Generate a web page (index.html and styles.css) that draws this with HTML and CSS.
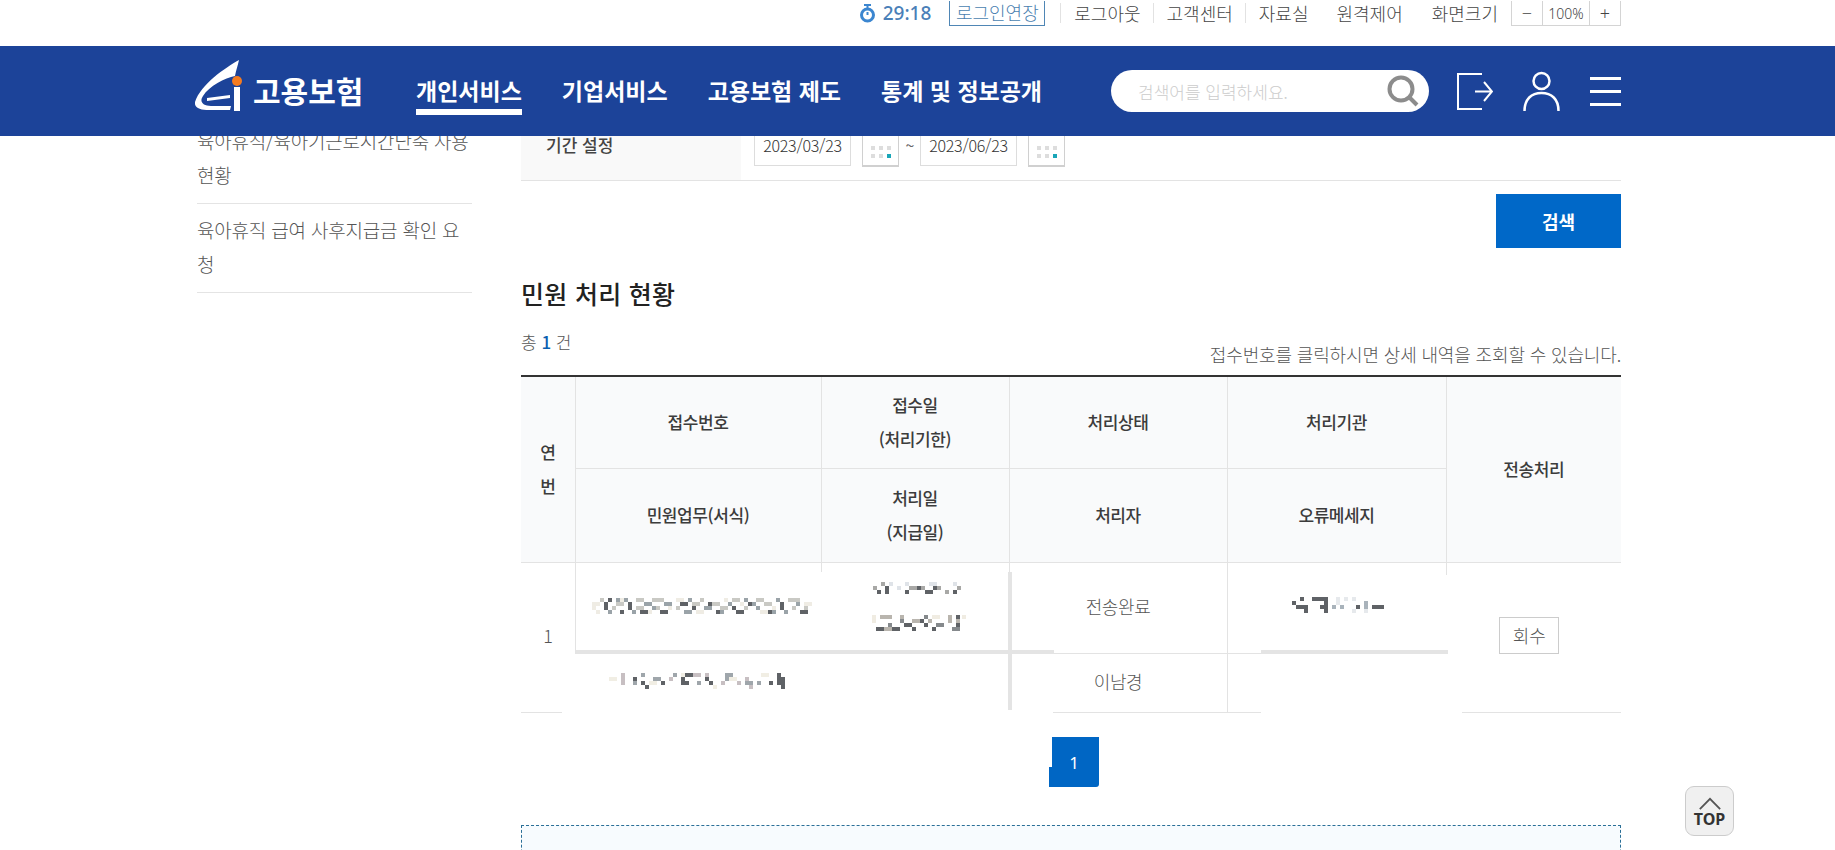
FILE: index.html
```html
<!DOCTYPE html>
<html lang="ko">
<head>
  <meta charset="UTF-8" />
  <title>고용보험 - 민원 처리 현황</title>
  <link rel="stylesheet" href="styles.css">
</head>
<body>

<div class="util">
  <div class="util-in">
    <svg class="watch" viewBox="0 0 19 19"><path d="M6 1h7M9.500 1v3" stroke="#3b86d0" stroke-width="2" fill="none"/><circle cx="9.500" cy="11" r="6" fill="none" stroke="#3b86d0" stroke-width="3"/><path d="M9.500 8v3" stroke="#3b86d0" stroke-width="2"/></svg>
    <span class="time">29:18</span>
    <a class="extend">로그인연장</a>
    <a class="util-link">로그아웃</a>
    <a class="util-link">고객센터</a>
    <a class="util-link">자료실</a>
    <a class="util-link plain">원격제어</a>
    <a class="util-link plain">화면크기</a>
    <div class="zoom-box">
      <span class="zb-btn">−</span>
      <span class="zb-val">100%</span>
      <span class="zb-btn">+</span>
    </div>
  </div>
</div>

<header class="nav">
  <div class="nav-in">
    <a class="logo">
      <svg class="logo-mark" viewBox="0 0 50 52">
        <path fill="#fff" d="M44 0C30 8 6 24 0 42C-1 48 6 50 14 50L35 50L36 46L16 46C8 46 4 42 8 36C14 26 30 18 40 16C41 10 43 5 44 0Z"/>
        <path fill="#fff" d="M12 38L35 35L35 38L12 41Z"/>
        <rect fill="#fff" x="39" y="27" width="6" height="24"/>
        <circle fill="#f47b20" cx="42" cy="21" r="5"/>
      </svg>
      <span class="logo-text">고용보험</span>
    </a>
    <nav class="menu">
      <a class="on">개인서비스</a>
      <a>기업서비스</a>
      <a>고용보험 제도</a>
      <a>통계 및 정보공개</a>
    </nav>
    <div class="search">
      <span class="ph">검색어를 입력하세요.</span>
      <svg class="glass" viewBox="0 0 34 32"><circle cx="15" cy="14" r="11.500" fill="none" stroke="#8c8c8c" stroke-width="4"/><path d="M23 22l8 8" stroke="#8c8c8c" stroke-width="4"/></svg>
    </div>
    <svg class="ico-out" viewBox="0 0 36 37" fill="none" stroke="#fff" stroke-width="2"><path d="M25 1H1v35h24"/><path d="M18 18.500h17M27 9l8 9.500-8 9.500"/></svg>
    <svg class="ico-user" viewBox="0 0 37 40" fill="none" stroke="#fff" stroke-width="2.500"><circle cx="18.500" cy="10" r="8"/><path d="M1.500 40c0-12 7-18 17-18s17 6 17 18"/></svg>
    <div class="ico-menu"><i></i><i></i><i></i></div>
  </div>
</header>

<div class="wrap">
  <aside class="side">
    <a class="side-item">육아휴직/육아기근로시간단축 사용 현황</a>
    <a class="side-item">육아휴직 급여 사후지급금 확인 요청</a>
  </aside>

  <main class="main">
    <div class="period">
      <div class="period-label">기간 설정</div>
      <div class="period-val">
        <span class="date">2023/03/23</span>
        <span class="cal"><i></i><i></i><i></i><i></i><i></i><i class="on"></i></span>
        <span class="tilde">~</span>
        <span class="date">2023/06/23</span>
        <span class="cal"><i></i><i></i><i></i><i></i><i></i><i class="on"></i></span>
      </div>
    </div>

    <div class="btn-row"><button class="btn-search">검색</button></div>

    <h3 class="title">민원 처리 현황</h3>

    <div class="count-row">
      <span class="count">총 <b>1</b> 건</span>
      <span class="note">접수번호를 클릭하시면 상세 내역을 조회할 수 있습니다.</span>
    </div>

    <div class="grid-wrap">
      <table class="grid">
        <colgroup>
          <col class="c1"><col class="c2"><col class="c3"><col class="c4"><col class="c5"><col class="c6">
        </colgroup>
        <thead>
          <tr class="h1">
            <th rowspan="2">연<br>번</th>
            <th>접수번호</th>
            <th>접수일<br>(처리기한)</th>
            <th>처리상태</th>
            <th>처리기관</th>
            <th rowspan="2">전송처리</th>
          </tr>
          <tr class="h2">
            <th>민원업무(서식)</th>
            <th>처리일<br>(지급일)</th>
            <th>처리자</th>
            <th>오류메세지</th>
          </tr>
        </thead>
        <tbody>
          <tr class="r1">
            <td rowspan="2">1</td>
            <td></td>
            <td></td>
            <td>전송완료</td>
            <td></td>
            <td rowspan="2"><button class="btn-small">회수</button></td>
          </tr>
          <tr class="r2">
            <td></td>
            <td></td>
            <td>이남경</td>
            <td></td>
          </tr>
        </tbody>
      </table>

      <!-- 개인정보 가림 처리 -->
      <div class="mask m-a"></div>
      <div class="mask m-b"></div>
      <div class="mask m-c"></div>
      <div class="mask m-d"></div>
      <div class="rule r-h1"></div>
      <div class="rule r-h2"></div>
      <div class="rule r-v"></div>

      <svg class="blur b1" viewBox="0 0 220 16" fill="none" stroke-width="4">
        <path stroke="#efece4" d="M0 6h8M0 10h4M28 2h4M56 14h4M84 2h8M104 14h8M148 6h4M168 14h8M212 6h8M4 14h4M76 10h4M132 2h4M180 10h4"/>
        <path stroke="#c9c9c4" d="M8 2h4M24 6h8M44 2h8M60 2h12M64 10h4M84 10h4M108 2h4M120 6h8M140 2h8M152 10h4M172 6h8M196 2h12M200 10h4M20 10h4M44 10h8M100 6h8M128 10h8M164 2h8M212 10h4"/>
        <path stroke="#9aa3a8" d="M16 14h4M32 2h4M52 6h8M72 6h8M92 14h8M112 10h8M128 14h4M152 2h4M160 6h4M184 2h4M192 14h4M204 6h4M24 2h4M40 14h4M60 10h4M96 2h4M136 6h4M164 10h4M180 14h4"/>
        <path stroke="#5f6266" d="M12 6h4M12 10h4M36 6h4M36 10h4M48 14h8M68 14h8M88 6h8M116 6h4M124 14h4M140 10h4M144 14h4M156 6h4M176 14h4M188 6h4M188 10h4M208 14h8M16 2h4M28 14h4M100 10h4M148 14h4"/>
      </svg>
      <svg class="blur b2" viewBox="0 0 90 12" fill="none" stroke-width="4">
        <path stroke="#dfe3e8" d="M16 2h4M24 6h4M32 2h4M56 2h8M80 2h4"/>
        <path stroke="#a8a8a6" d="M8 2h4M0 6h4M36 6h8M48 6h4M64 6h4M72 10h4M84 6h4"/>
        <path stroke="#5f6266" d="M4 10h4M12 6h4M12 10h4M32 10h4M44 6h4M52 10h8M60 6h4M80 10h4"/>
      </svg>
      <svg class="blur b3" viewBox="0 0 94 16" fill="none" stroke-width="4">
        <path stroke="#f0ece2" d="M0 2h4M0 6h4M60 2h8M90 2h4"/>
        <path stroke="#b9b5ae" d="M8 2h12M28 2h4M40 6h8M56 6h4M76 2h4M76 6h4M84 6h4M8 14h12"/>
        <path stroke="#85898c" d="M16 10h4M28 6h4M52 2h4M64 10h8M80 14h8"/>
        <path stroke="#5f6266" d="M4 14h8M20 14h8M32 10h8M40 14h4M48 6h4M52 10h4M60 14h4M84 2h4M84 10h4"/>
      </svg>
      <svg class="blur b4" viewBox="0 0 180 18" fill="none" stroke-width="4">
        <path stroke="#f1eee4" d="M0 6h8M40 10h8M72 2h4M120 6h8M152 2h8M104 14h4"/>
        <path stroke="#c7bfc2" d="M12 2h4M12 6h4M12 10h4M60 6h4M96 2h4M112 10h4M136 6h4M140 14h4M84 2h8M128 10h4"/>
        <path stroke="#9fa6ab" d="M32 2h4M44 6h8M64 2h4M88 10h4M116 2h8M116 6h4M136 10h8M148 10h4M24 10h4"/>
        <path stroke="#5f6266" d="M24 6h4M32 10h4M36 14h4M52 10h4M72 6h4M72 10h8M96 6h4M100 10h4M160 10h4M168 2h4M168 6h8M168 10h8M172 14h4M76 2h8"/>
      </svg>
      <svg class="blur b5" viewBox="0 0 92 18" fill="none" stroke-width="4">
        <path stroke="#e6e9ec" d="M44 2h4M44 6h4M52 2h4M60 2h4M60 14h4M72 14h4M84 10h4"/>
        <path stroke="#a9b3bb" d="M40 10h4M48 10h4M72 6h4M72 10h4"/>
        <path stroke="#5f6266" d="M0 6h4M8 2h4M20 2h16M4 10h12M28 10h8M12 14h4M32 6h4M32 14h4M64 10h4M80 10h12"/>
      </svg>
    </div>

    <div class="paging"><a class="page">1</a></div>

    <div class="notice"></div>
  </main>
</div>

<a class="top-btn">
  <svg viewBox="0 0 26 14" fill="none" stroke="#555" stroke-width="2"><path d="M2 13L13 2l11 11"/></svg>
  <span>TOP</span>
</a>

</body>
</html>
```

FILE: styles.css
```css
html, body { margin: 0; padding: 0; height: 850px; overflow: hidden; background: #fff; }
body { font-family: "Noto Sans CJK KR", "Noto Sans", sans-serif; color: #555; }
a { color: inherit; text-decoration: none; }

/* top utility bar */
.util { height: 46px; background: #fff; position: relative; z-index: 3; }
.util-in { width: 1426px; margin-left: 195px; height: 26px; display: flex; justify-content: flex-end; align-items: center; font-size: 18px; font-weight: 300; color: #444; }
.watch { width: 19px; height: 19px; margin-right: 6px; }
.time { color: #4a7fb8; font-size: 19px; font-weight: 500; font-family: "Noto Sans", sans-serif; margin-right: 18px; }
.extend { width: 96px; height: 25px; box-sizing: border-box; border: 1px solid #4f86b5; border-top: 0; color: #4a7fb0; text-align: center; line-height: 22px; margin-right: 15px; white-space: nowrap; }
.util-link { padding: 0 12px 0 13px; line-height: 20px; border-left: 1px solid #e2e2e2; white-space: nowrap; }
.util-link.plain { border-left: 0; padding: 0 13px 0 16px; }
.zoom-box { display: flex; width: 110px; height: 25px; box-sizing: border-box; border: 1px solid #d4d4d4; border-top: 0; font-size: 14px; line-height: 25px; text-align: center; }
.zb-btn { width: 30px; font-size: 18px; line-height: 24px; font-family: "Noto Sans", sans-serif; }
.zb-val { flex: 1; border: 1px solid #d4d4d4; border-width: 0 1px; font-family: "Noto Sans", sans-serif; font-size: 14px; }

/* main navigation */
.nav { height: 90px; background: #1c4399; position: relative; z-index: 2; }
.nav-in { width: 1426px; margin-left: 195px; height: 90px; position: relative; display: flex; align-items: center; }
.logo { display: flex; align-items: flex-end; width: 221px; height: 52px; margin-top: -10px; }
.logo-mark { width: 50px; height: 52px; margin-right: 8px; flex: none; }
.logo-text { color: #fff; font-size: 30px; font-weight: 700; line-height: 36px; margin-bottom: 4px; white-space: nowrap; }
.menu { display: flex; gap: 40px; height: 90px; align-items: center; width: 695px; flex: none; }
.menu a { color: #fff; font-size: 23px; font-weight: 700; line-height: 30px; position: relative; white-space: nowrap; top: -1px; }
.menu a.on::after { content: ""; position: absolute; left: 0; right: 0; top: 34px; height: 6px; background: #fff; }
.search { position: relative; width: 318px; height: 42px; background: #fff; border-radius: 21px; flex: none; display: flex; align-items: center; padding-left: 27px; box-sizing: border-box; }
.ph { color: #ccc; font-size: 17px; font-weight: 300; }
.glass { position: absolute; right: 9px; top: 5px; width: 34px; height: 32px; }
.ico-out { width: 36px; height: 37px; margin-left: 28px; flex: none; }
.ico-user { width: 37px; height: 40px; margin-left: 30px; flex: none; }
.ico-menu { width: 31px; margin-left: 30px; display: flex; flex-direction: column; gap: 10px; }
.ico-menu i { display: block; height: 3px; background: #fff; }

.wrap { display: flex; margin: -26px 0 0 197px; width: 1424px; align-items: flex-start; }
.side { width: 275px; margin: 5px 49px 0 0; flex: none; }
.side-item { display: block; padding: 9px 0 11px; font-size: 19px; line-height: 34px; font-weight: 300; color: #555; border-bottom: 1px solid #e4e4e4; letter-spacing: -.2px; }
.main { flex: 1; width: 1100px; }

.period { display: flex; height: 70px; border-bottom: 1px solid #e3e3e3; }
.period-label { width: 220px; background: #f9f9f9; line-height: 70px; padding-left: 25px; box-sizing: border-box; font-size: 17px; font-weight: 500; color: #444; }
.period-val { display: flex; align-items: center; padding-left: 13px; }
.date { width: 97px; height: 40px; border: 1px solid #ddd; box-sizing: border-box; line-height: 36px; text-align: center; font-size: 16px; font-weight: 300; color: #333; letter-spacing: -.25px; margin-top: 2px; white-space: nowrap; }
.cal { width: 37px; height: 41px; box-sizing: border-box; border: 1px solid #d0d0d0; border-bottom-width: 2px; margin: 2px 0 0 11px; display: grid; grid-template-columns: repeat(3, 4px); grid-auto-rows: 4px; gap: 4px; align-content: end; justify-content: center; padding-bottom: 7px; }
.cal i { background: #ddd; }
.cal i.on { background: #19a6b8; }
.tilde { width: 21px; text-align: center; font-size: 16px; color: #666; padding-left: 1px; box-sizing: border-box; }

.btn-row { display: flex; justify-content: flex-end; margin-top: 13px; }
.btn-search { width: 125px; height: 54px; background: #0068c8; border: 0; color: #fff; font: 700 18px "Noto Sans CJK KR", sans-serif; }

.title { margin: 25px 0 0; font-size: 25px; font-weight: 500; line-height: 40px; color: #222; letter-spacing: .3px; }
.count-row { display: flex; justify-content: space-between; height: 62px; }
.count { font-size: 17px; line-height: 28px; margin-top: 15px; font-weight: 300; }
.count b { color: #0b5fb0; font-weight: 500; }
.note { font-size: 18px; font-weight: 300; line-height: 28px; margin-top: 27px; letter-spacing: -.15px; color: #555; }

/* list table */
.grid-wrap { position: relative; width: 1100px; }
.grid { width: 1100px; table-layout: fixed; border-collapse: collapse; border-top: 2px solid #333; }
.c1 { width: 54px; }
.c2 { width: 246px; }
.c3 { width: 188px; }
.c4 { width: 218px; }
.c5 { width: 219px; }
.c6 { width: 175px; }
.grid th, .grid td { border: 1px solid #e3e3e3; text-align: center; padding: 0; }
.grid tr > :first-child { border-left: 0; }
.grid tr > :last-child { border-right: 0; }
.grid th { background: #f9fafb; font-size: 17px; font-weight: 500; line-height: 34px; color: #3c3c3c; letter-spacing: -.4px; }
.grid td { font-size: 18px; font-weight: 300; color: #555; letter-spacing: -.4px; padding-bottom: 4px; }
.h1 { height: 92px; }
.h2 { height: 94px; }
.r1 { height: 91px; }
.r2 { height: 59px; }
.btn-small { width: 60px; height: 37px; border: 1px solid #ccc; background: #fff; font: 300 18px "Noto Sans CJK KR", sans-serif; color: #555; padding: 0; margin-right: 9px; }

/* masked personal data, laid over the table */
.mask { position: absolute; background: #fff; }
.m-a { left: 41px; top: 279px; width: 491px; height: 60px; }
.m-b { left: 55px; top: 197px; width: 432px; height: 80px; }
.m-c { left: 740px; top: 279px; width: 201px; height: 60px; }
.m-d { left: 730px; top: 200px; width: 198px; height: 78px; }
.rule { position: absolute; background: #e4e4e4; }
.r-h1 { left: 55px; top: 275px; width: 478px; height: 4px; }
.r-h2 { left: 740px; top: 275px; width: 187px; height: 4px; }
.r-v { left: 487px; top: 197px; width: 4px; height: 138px; }
.blur { position: absolute; }
.b1 { left: 71px; top: 223px; width: 220px; height: 16px; }
.b2 { left: 352px; top: 207px; width: 90px; height: 12px; }
.b3 { left: 351px; top: 240px; width: 94px; height: 16px; }
.b4 { left: 88px; top: 298px; width: 180px; height: 18px; }
.b5 { left: 771px; top: 222px; width: 92px; height: 18px; }

.paging { display: flex; justify-content: center; padding-left: 6px; margin-top: 24px; }
.page { position: relative; width: 50px; height: 50px; background: #0066c4; color: #fff; font-size: 17px; line-height: 52px; text-align: center; border-radius: 0 0 3px 0; font-family: "Noto Sans", sans-serif; }
.page::before { content: ""; position: absolute; left: 0; top: 0; width: 3px; height: 30px; background: #fff; }
.notice { margin-top: 38px; height: 60px; border: 1px dashed #2a6f97; background: #f7fbfe; }

.top-btn { position: fixed; left: 1685px; top: 786px; width: 49px; height: 50px; box-sizing: border-box; background: #f0f0f0; border: 1px solid #ccc; border-radius: 9px; display: flex; flex-direction: column; align-items: center; padding-top: 10px; z-index: 4; }
.top-btn svg { width: 24px; height: 13px; }
.top-btn span { font-size: 16px; font-weight: 700; line-height: 18px; color: #333; font-family: "Noto Sans", sans-serif; }
```
